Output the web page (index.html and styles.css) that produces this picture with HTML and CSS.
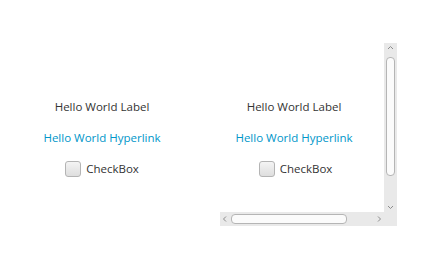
FILE: index.html
```html
<!DOCTYPE html>
<html>
<head>
<meta charset="utf-8">
<link rel="stylesheet" href="styles.css">
</head>
<body>
<div class="root">
  <div class="column left">
    <div class="label">Hello World Label</div>
    <a class="link" href="#">Hello World Hyperlink</a>
    <label class="check"><span class="box"></span><span>CheckBox</span></label>
  </div>
  <div class="scrollpane">
    <div class="viewport">
      <div class="column inner">
        <div class="label">Hello World Label</div>
        <a class="link" href="#">Hello World Hyperlink</a>
        <label class="check"><span class="box"></span><span>CheckBox</span></label>
      </div>
    </div>
    <div class="vbar">
      <svg class="arrow" width="13" height="10" viewBox="0 0 13 10"><path d="M4 6 L6.5 3.5 L9 6" fill="none" stroke="#8c8c8c" stroke-width="1"/></svg>
      <div class="vtrack"><div class="vthumb"></div></div>
      <svg class="arrow" width="13" height="10" viewBox="0 0 13 10"><path d="M4 4 L6.5 6.5 L9 4" fill="none" stroke="#8c8c8c" stroke-width="1"/></svg>
    </div>
    <div class="hbar">
      <svg class="arrow" width="10" height="14" viewBox="0 0 10 14"><path d="M6 4.5 L3.5 7 L6 9.5" fill="none" stroke="#8c8c8c" stroke-width="1"/></svg>
      <div class="htrack"><div class="hthumb"></div></div>
      <svg class="arrow" width="10" height="14" viewBox="0 0 10 14"><path d="M4 4.5 L6.5 7 L4 9.5" fill="none" stroke="#8c8c8c" stroke-width="1"/></svg>
    </div>
    <div class="corner"></div>
  </div>
</div>
</body>
</html>
```
FILE: styles.css
```css
html, body {
  margin: 0;
  padding: 0;
  background: #ffffff;
}
body {
  width: 434px;
  height: 273px;
  font-family: "Open Sans", "Segoe UI", sans-serif;
  font-size: 11.5px;
  color: #333333;
}
.root {
  display: flex;
  padding-top: 43px;
}
.column {
  display: flex;
  flex-direction: column;
  align-items: center;
  gap: 15px;
  padding-top: 56px;
}
.left {
  width: 204px;
}
.label, .link, .check {
  height: 16px;
  line-height: 16px;
}
.link {
  color: #0096c9;
  text-decoration: none;
}
.check {
  display: flex;
  align-items: center;
  gap: 5px;
}
.inner .check {
  margin-left: 3px;
}
.box {
  width: 14px;
  height: 14px;
  border: 1px solid #b4b4b4;
  border-radius: 3px;
  background: linear-gradient(#f4f4f4, #dedede);
}
.scrollpane {
  margin-left: 16px;
  width: 177px;
  height: 183px;
  display: grid;
  grid-template-columns: 164px 13px;
  grid-template-rows: 169px 14px;
}
.viewport {
  overflow: hidden;
}
.inner {
  width: 148px;
}
.vbar {
  background: #e9e9e9;
  display: flex;
  flex-direction: column;
  align-items: center;
}
.vtrack {
  flex: 1;
  width: 13px;
  padding-top: 4px;
  display: flex;
  justify-content: center;
}
.vthumb {
  width: 7px;
  height: 117px;
  border: 1px solid #b5b5b5;
  border-radius: 4px;
  background: #fbfbfb;
}
.hbar {
  background: #e9e9e9;
  display: flex;
  align-items: center;
}
.htrack {
  flex: 1;
  height: 14px;
  display: flex;
  align-items: center;
  padding-left: 1px;
}
.hthumb {
  width: 114px;
  height: 8px;
  border: 1px solid #b5b5b5;
  border-radius: 4px;
  background: #fbfbfb;
}
.corner {
  background: #e9e9e9;
}
.arrow {
  display: block;
  flex: none;
}
```
